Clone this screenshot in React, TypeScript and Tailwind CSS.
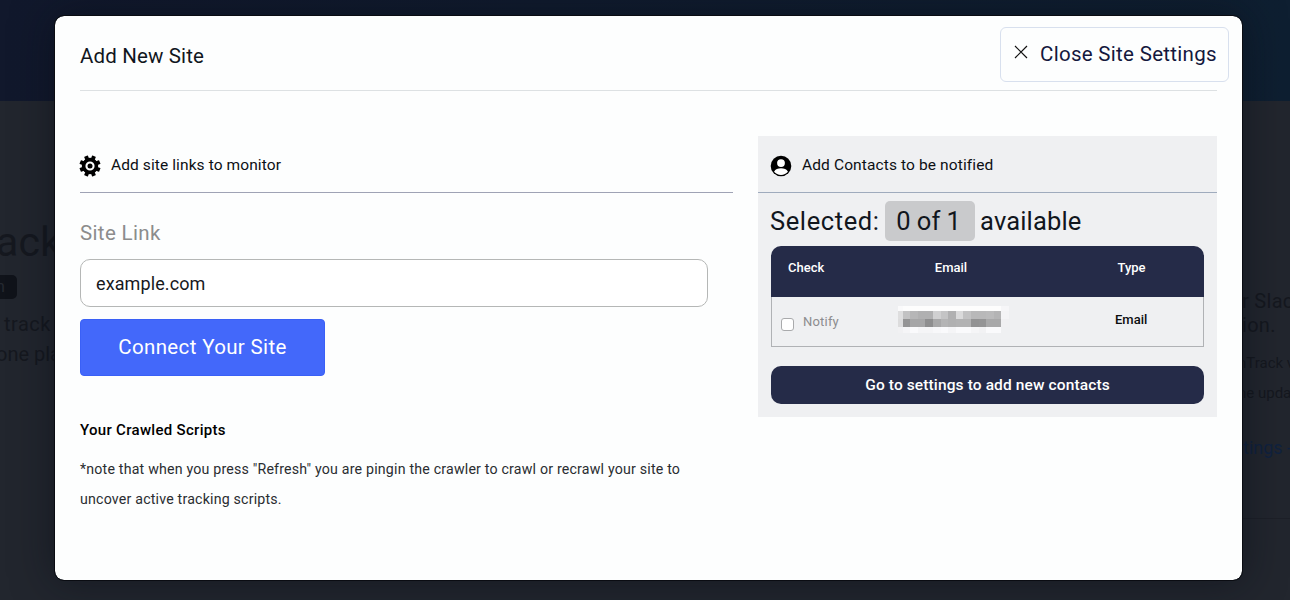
import { clsx } from "clsx";

interface MosaicRow {
  height: string;
  cells: string[];
}

// Redacted address, one colour per block
const mosaic: MosaicRow[] = [
  {
    height: "h-[5px]",
    cells: ["#fafafb", "#fdfdfd", "#fdfdfd", "#fdfdfd", "#fdfdfd", "#fdfdfd", "#fdfdfd", "#fdfdfd", "#fdfdfd", "#fdfdfd", "#fdfdfd", "#fdfdfd", "#fdfdfd", "#fdfdfd", "#f6f6f8"],
  },
  {
    height: "h-[8px]",
    cells: ["#dededf", "#c2c2c3", "#b6b6b7", "#b0b0b1", "#b0b0b1", "#d0d0d1", "#c4c4c5", "#b0b0b1", "#dadadb", "#c2c2c3", "#b8b8b9", "#b8b8b9", "#bababb", "#b4b4b5", "#f4f4f6"],
  },
  {
    height: "h-[8px]",
    cells: ["#dcdcdd", "#949495", "#a6a6a7", "#a6a6a7", "#8e8e8f", "#a8a8a9", "#b4b4b5", "#b0b0b1", "#b2b2b3", "#b2b2b3", "#929293", "#949495", "#a8a8a9", "#a8a8a9", "#f0f0f2"],
  },
  {
    height: "h-[6px]",
    cells: ["#f1f1f3", "#f5f5f7", "#fafafc", "#f5f5f7", "#f5f5f7", "#f8f8fa", "#fafafc", "#f5f5f7", "#fafafc", "#fafafc", "#f5f5f7", "#f2f2f4", "#fafafc", "#fafafc", "#eff0f2"],
  },
];

const teeth = [22.5, 67.5, 112.5, 157.5, 202.5, 247.5, 292.5, 337.5];

function GearIcon() {
  return (
    <svg viewBox="0 0 22 22" className="size-[22px] shrink-0">
      {teeth.map((angle) => (
        <rect key={angle} x="9" y="0.4" width="4" height="5" rx="0.4" transform={`rotate(${angle} 11 11)`} />
      ))}
      <circle cx="11" cy="11" r="6.4" fill="none" stroke="#000" strokeWidth="3.6" />
      <circle cx="11" cy="11" r="2.5" />
    </svg>
  );
}

function ContactIcon() {
  return (
    <svg viewBox="0 0 22 22" className="size-[22px] shrink-0">
      <circle cx="11" cy="11" r="10.3" />
      <circle cx="11" cy="8.1" r="3.9" fill="#fff" />
      <path d="M4 16.7C5.4 14.3 8 13.3 11 13.3s5.6 1 7 3.4c-1.7 2-4.2 3.2-7 3.2s-5.3-1.2-7-3.2z" fill="#fff" />
    </svg>
  );
}

function Backdrop() {
  return (
    <div className="h-full">
      <div className="h-[101px] bg-linear-to-r from-[#11182c] to-[#0e1f31]" />
      <div className="flex justify-between whitespace-nowrap text-[#15181f]">
        <div className="w-[54px] overflow-hidden pt-[117px]">
          <div className="-ml-1 text-[41px] leading-[48px] tracking-[0.3px]">ack</div>
          <div className="mt-[9px] flex h-[24px] w-[17px] items-center rounded-r-[5px] bg-[#10131a] text-[16px] text-[#252931]">
            <span className="-ml-1">n</span>
          </div>
          <div className="mt-2.5 pl-1 text-[20px] leading-[30px] tracking-[0.5px]">track</div>
          <div className="-ml-1 text-[20px] leading-[30px]">one pla</div>
        </div>
        <div className="w-12 overflow-hidden pt-[188px]">
          <div className="text-[20px] leading-6 tracking-[0.3px]">r Slac</div>
          <div className="text-[20px] leading-6 tracking-[0.3px]">ion.</div>
          <div className="mt-[11px] -ml-1 text-[15px] leading-[30px]">nTrack v</div>
          <div className="-ml-1 text-[15px] leading-[30px]">ne upda</div>
          <div className="mt-[26px] pl-px text-[18px] leading-[28px] text-[#10223f]">tings -</div>
          <div className="mt-[56px] h-px bg-[#1d2028]" />
        </div>
      </div>
    </div>
  );
}

function SiteLinks() {
  return (
    <section className="w-[653px]">
      <div className="flex h-[57px] items-center gap-[10px] border-b border-[#9fa3b5] pt-[3px] text-[15.5px] tracking-[0.1px] text-[#0c0f14]">
        <span className="-ml-px flex">
          <GearIcon />
        </span>
        <span className="pt-px">Add site links to monitor</span>
      </div>
      <label className="mt-[25px] block text-[20.5px] leading-[30px] tracking-[0.35px] text-[#8c8c8c]">Site Link</label>
      <input
        defaultValue="example.com"
        className="mt-[11px] block h-12 w-[628px] rounded-[10px] border border-[#b5b7b6] bg-white px-[15px] text-[18px] tracking-[0.1px] text-[#17191c] outline-none"
      />
      <button className="mt-3 block h-[57px] w-[245px] rounded-[4px] border border-[#3a60f6] bg-[#4368fa] pb-px text-[20.5px] tracking-[0.35px] text-white">
        Connect Your Site
      </button>
      <h3 className="mt-[42px] text-[15px] leading-6 font-medium tracking-[0.3px] text-black">Your Crawled Scripts</h3>
      <p className="mt-[12px] w-[620px] text-[14.2px] leading-[30px] tracking-[0.19px] text-[#2a2d31]">
        *note that when you press "Refresh" you are pingin the crawler to crawl or recrawl your site to uncover active
        tracking scripts.
      </p>
    </section>
  );
}

function Contacts() {
  return (
    <section className="h-[281px] w-[459px] bg-[#eff0f2]">
      <div className="flex h-[57px] items-center gap-[10px] border-b border-[#9fabbd] pt-[3px] pl-3 text-[15.5px] tracking-[0.12px] text-[#0c0f14]">
        <span className="flex">
          <ContactIcon />
        </span>
        <span className="pt-px">Add Contacts to be notified</span>
      </div>
      <div className="mt-2 flex h-10 items-center pl-3 text-[25.5px] text-[#11161d]">
        <span className="tracking-[0.6px]">Selected:</span>
        <span className="mr-[5px] ml-[5.5px] flex h-10 w-[90px] items-center justify-center rounded-[5px] bg-[#c9cacc] pr-[3px]">
          0 of 1
        </span>
        <span className="tracking-[0.15px]">available</span>
      </div>
      <div className="mx-[13px] mt-[5px] text-[13px]">
        <div className="grid h-[51px] grid-cols-[108px_144px_181px] rounded-t-[10px] bg-[#252b48] pt-3 leading-5 font-medium text-white">
          <div className="pl-[17px]">Check</div>
          <div className="text-center">Email</div>
          <div className="pl-[36px] text-center">Type</div>
        </div>
        <div className="grid h-[50px] grid-cols-3 border border-t-0 border-[#b0b2b5]">
          <label className="flex items-center pl-[9px] tracking-[0.2px] text-[#8c8c8e]">
            <input
              type="checkbox"
              className="mt-[5px] mr-[9px] size-[13px] appearance-none rounded-[3px] border border-[#a9aaac] bg-white"
            />
            Notify
          </label>
          <div className="-ml-[18px] pt-[9px]">
            {mosaic.map((row, i) => (
              <div key={i} className={clsx("flex", row.height)}>
                {row.cells.map((color, j) => (
                  <span
                    key={j}
                    className={clsx("h-full", j === 0 ? "w-[5px]" : "w-[7.6px]")}
                    style={{ backgroundColor: color }}
                  />
                ))}
              </div>
            ))}
          </div>
          <div className="pt-[13px] text-center leading-5 font-medium text-[#0c0d0f]">Email</div>
        </div>
      </div>
      <button className="mx-[13px] mt-[19px] block h-[38px] w-[433px] rounded-[10px] bg-[#252b48] pt-0.5 text-[15.5px] font-medium tracking-[0.12px] text-white">
        Go to settings to add new contacts
      </button>
    </section>
  );
}

export default function App() {
  return (
    <div className="relative h-[600px] w-[1290px] overflow-hidden bg-[#22262e] font-[Roboto,sans-serif]">
      <Backdrop />
      <div className="absolute top-[15px] left-[54px] h-[566px] w-[1189px] rounded-[10px] border border-[#0a0c12] bg-[#fdfefe] bg-clip-padding px-[25px] shadow-[0_0_40px_rgba(10,12,22,0.55)]">
        <header className="flex h-[75px] items-start justify-between border-b border-[#dde1e3]">
          <h2 className="pt-[25px] text-[20.5px] leading-[30px] tracking-[0.15px] text-[#11161d]">Add New Site</h2>
          <button className="-mr-3 mt-[11px] flex h-[55px] w-[229px] shrink-0 items-center rounded-[6px] border border-[#d8e0ee] pb-px pl-[13px] text-[20.5px] tracking-[0.3px] whitespace-nowrap text-[#14183d]">
            <svg viewBox="0 0 14 14" className="mr-[12px] mb-[4px] size-[14px]" fill="none" stroke="#111" strokeWidth="1.2">
              <path d="M1 1l12 12M13 1L1 13" />
            </svg>
            Close Site Settings
          </button>
        </header>
        <div className="flex items-start justify-between pt-[45px]">
          <SiteLinks />
          <Contacts />
        </div>
      </div>
    </div>
  );
}
